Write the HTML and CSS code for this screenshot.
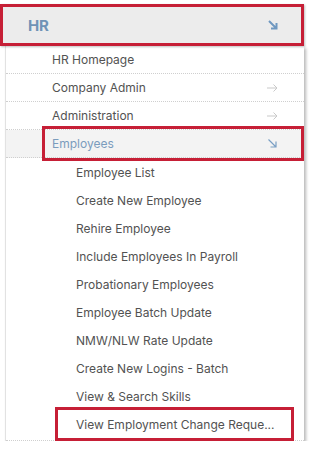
FILE: index.html
```html
<!DOCTYPE html>
<html>
<head>
<meta charset="utf-8">
<link rel="stylesheet" href="styles.css">
</head>
<body>
<div class="menu">
  <div class="menu-head">
    <span class="head-title">HR</span>
    <svg class="diag bold" width="10" height="10" viewBox="0 0 10 10"><path d="M1 1 L8.5 8.5 M3 8.5 H8.5 V3" fill="none" stroke="currentColor" stroke-width="2"/></svg>
  </div>
  <div class="panel">
    <div class="row">HR Homepage</div>
    <div class="row">Company Admin<svg class="arrow" width="11" height="8" viewBox="0 0 11 8"><path d="M0 4 H10 M6.5 0.5 L10 4 L6.5 7.5" fill="none" stroke="currentColor" stroke-width="1"/></svg></div>
    <div class="row">Administration<svg class="arrow" width="11" height="8" viewBox="0 0 11 8"><path d="M0 4 H10 M6.5 0.5 L10 4 L6.5 7.5" fill="none" stroke="currentColor" stroke-width="1"/></svg></div>
    <div class="row active">Employees<svg class="diag" width="9" height="9" viewBox="0 0 9 9"><path d="M0.5 0.5 L8 8 M2.5 8 H8 V2.5" fill="none" stroke="currentColor" stroke-width="1.2"/></svg></div>
    <div class="sub">
      <div class="sub-row">Employee List</div>
      <div class="sub-row">Create New Employee</div>
      <div class="sub-row">Rehire Employee</div>
      <div class="sub-row">Include Employees In Payroll</div>
      <div class="sub-row">Probationary Employees</div>
      <div class="sub-row">Employee Batch Update</div>
      <div class="sub-row">NMW/NLW Rate Update</div>
      <div class="sub-row">Create New Logins - Batch</div>
      <div class="sub-row">View &amp; Search Skills</div>
      <div class="sub-row marked">View Employment Change Reque...</div>
    </div>
  </div>
</div>
</body>
</html>
```

FILE: styles.css
```css
* { box-sizing: border-box; }
body {
  margin: 0;
  background: #ffffff;
  font-family: Inter, "Noto Sans", sans-serif;
  font-size: 12px;
  color: #525252;
}
.menu {
  width: 304px;
  margin-top: 4px;
}
.menu-head {
  height: 42px;
  border: 3px solid #c61f36;
  background: #ececec;
  display: flex;
  align-items: center;
  justify-content: space-between;
  padding: 0 23px 0 25px;
  box-shadow: 1px 1px 2px rgba(0,0,0,0.25);
  position: relative;
  z-index: 2;
}
.head-title {
  font-weight: 700;
  font-size: 15px;
  color: #6f93b6;
  letter-spacing: -0.2px;
}
.diag { color: #7a9fc4; display: block; }
.diag.bold { color: #6f98c0; }
.panel {
  margin-left: 5px;
  width: 299px;
  background: #fff;
  border-left: 1px solid #e2e2e2;
  box-shadow: 2px 2px 3px rgba(0,0,0,0.28);
}
.row {
  height: 28px;
  display: flex;
  align-items: center;
  justify-content: space-between;
  padding: 0 26px 0 46px;
  border-bottom: 1px dotted #cfcfcf;
  position: relative;
}
.arrow { color: #c9c9c9; display: block; }
.row.active {
  background: #f3f3f3;
  color: #7b9cbd;
  padding-right: 27px;
}
.row.active::after {
  content: "";
  position: absolute;
  top: -4px;
  bottom: -4px;
  left: 36px;
  right: 0;
  border: 3px solid #c61f36;
}
.sub {
  padding-bottom: 2px;
  border-bottom: 1px dotted #cfcfcf;
}
.sub-row {
  height: 28px;
  display: flex;
  align-items: center;
  padding-left: 70px;
  position: relative;
}
.sub-row.marked::after {
  content: "";
  position: absolute;
  top: -3px;
  bottom: -3px;
  left: 49px;
  right: 10px;
  border: 3px solid #c61f36;
}
```
